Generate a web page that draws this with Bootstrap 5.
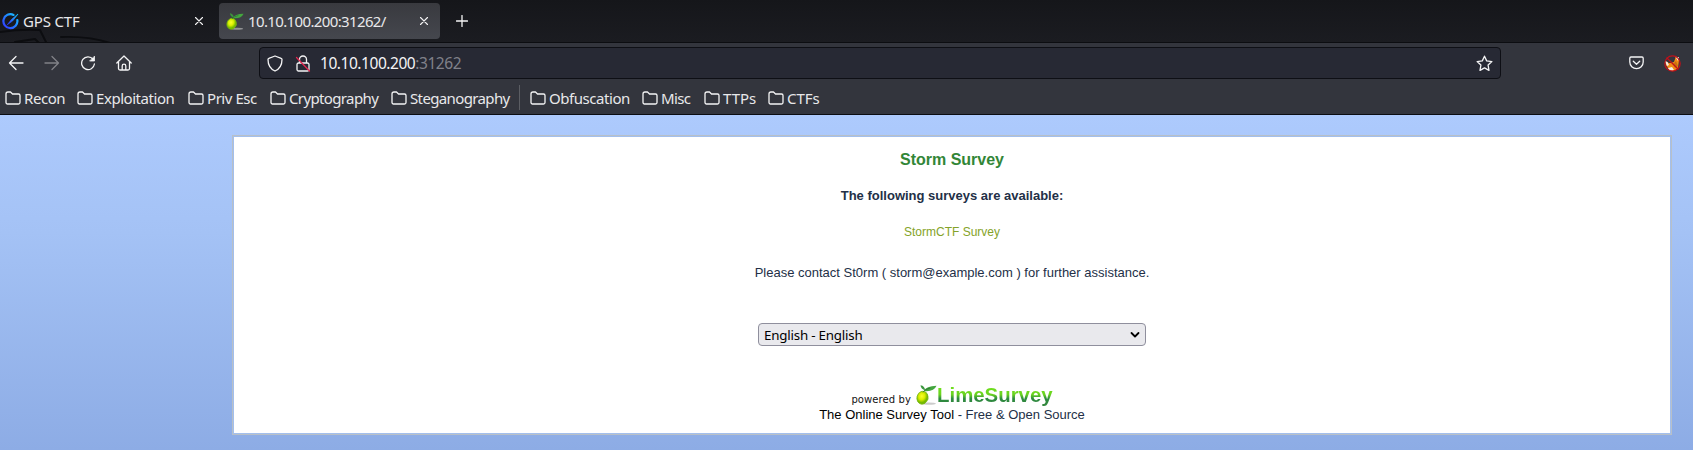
<!DOCTYPE html>
<html lang="en">
<head>
<meta charset="utf-8">
<title>Storm Survey</title>
<link href="https://cdn.jsdelivr.net/npm/bootstrap@5.3.0/dist/css/bootstrap.min.css" rel="stylesheet">
<style>
body{height:450px;overflow:hidden;background:#abc9fc;font-family:"Noto Sans",sans-serif;font-size:15px;line-height:20px}
svg{display:block;flex:none;fill:none;stroke:#f4f4f5;stroke-width:1.3;stroke-linecap:round;stroke-linejoin:round}
.tabstrip{height:43px;background:linear-gradient(#15161a,#1b1c21);border-bottom:1px solid #0c0d11;color:#e8e8ea;position:relative}
.dragon{position:absolute;left:0;top:26px}
.tab-one{width:219px;padding:0 15px 0 2px;position:relative}
.tab-two{width:221px;height:36px;padding:0 11px 0 7px;border-radius:4px;background:linear-gradient(#393a3f,#45474e)}
.toolbar{height:72px;background:#33353d;border-bottom:1px solid #0c0d12;color:#e8e8ea}
.navrow{height:40px;padding-top:4px}
.urlbar{width:1242px;height:32px;border:1px solid #0e0f15;border-radius:4px;background:#272934;font-size:15.5px;letter-spacing:-.45px;color:#f4f4f6}
.urlbar .port{color:#80818a}
.marks{height:29px;padding-left:5px}
.folder{gap:3px}
.tight{letter-spacing:-.45px}
.tighter{letter-spacing:-.63px}
.divider{width:1px;height:25px;background:#5b5d63}
.viewport{height:335px;padding:21px 22px 0 233px;background:linear-gradient(#adcafd,#a4c2f5 35%,#8dace5)}
.panel{height:298px;background:#fff;border:1px solid #a3bfed;outline:1px solid #b8c0c8;color:#233047;font:13px/16px "Liberation Sans",sans-serif;text-align:center}
.panel h1{font:bold 16px/20px "Liberation Sans",sans-serif;color:#328637;margin:13px 0 0}
.survey-link{font-size:12px;color:#85a329;text-decoration:none}
.lang{width:388px;height:23px;border:1px solid #8f8f9d;border-radius:4px;background:#e9e9ed;color:#000;font:13.33px/20px "Noto Sans",sans-serif;letter-spacing:-.2px;padding:0 5px 0 5px}
.powered{font:10px/12px "DejaVu Sans",sans-serif;letter-spacing:.1px;color:#111}
.wordmark{font:bold 20.4px/23px "Liberation Sans",sans-serif;background:linear-gradient(#6fe01c 10%,#6bd51f 45%,#2d8a40 64%,#35863c);-webkit-background-clip:text;background-clip:text;color:transparent}
</style>
</head>
<body>
<svg width="0" height="0" class="position-absolute"><defs>
<linearGradient id="blue" x1="0" y1="1" x2="1" y2="0"><stop stop-color="#3433ff"/><stop offset="1" stop-color="#13c9ff"/></linearGradient>
<radialGradient id="limefill" cx=".4" cy=".4"><stop stop-color="#faff2e"/><stop offset=".55" stop-color="#d9ee00"/><stop offset="1" stop-color="#75b900"/></radialGradient>
<symbol id="folder" viewBox="0 0 16 14"><path d="M1 3a2 2 0 0 1 2-2h2.500l2 2H13.500a1.500 1.500 0 0 1 1.500 1.500v7a1.500 1.500 0 0 1-1.500 1.500h-11A1.500 1.500 0 0 1 1 11.500z"/></symbol>
<symbol id="lime" viewBox="0 0 21 20"><g stroke="none"><ellipse cx="13" cy="18.6" rx="7" ry="1.2" fill="#b7b7b7" opacity=".7"/><ellipse cx="6.5" cy="12.7" rx="5.5" ry="6.5" transform="rotate(15 6.5 12.7)" fill="url(#limefill)" stroke="#78b812" stroke-width=".8"/><path d="M8 6Q10 1 20.500.8 18 7 8 6" fill="#44a63f"/><path d="M9 5.500Q5 4 4.500.3 9 1 9 5.500" fill="#3b963d"/><path d="M7 7Q9 4 14 3" fill="none" stroke="#24742f" stroke-width=".8"/></g></symbol>
</defs></svg>

<header>
<div class="tabstrip d-flex align-items-center">
  <svg class="dragon" width="130" height="17" viewBox="0 0 130 17" style="stroke:#0c0d10;stroke-width:2"><path d="M0 6Q20 3 40 4l7 14M15 16l20-3 4 4M61 11Q90 10 110 17"/></svg>
  <div class="tab-one d-flex align-items-center">
    <svg width="17" height="17" viewBox="0 0 17 17" style="stroke:url(#blue);stroke-width:2.2"><path d="M11.500 1.900A7 7 0 1 0 15.300 7"/><path d="M5.500 11.500l4-5L16 1l-5 6.500z" fill="url(#blue)" stroke-width=".7"/></svg>
    <span class="ms-1 me-auto" style="letter-spacing:-.15px">GPS CTF</span>
    <svg width="10" height="10" viewBox="0 0 10 10" style="stroke-width:1.1"><path d="M1.500 1.500l7 7m0-7l-7 7"/></svg>
  </div>
  <div class="tab-two d-flex align-items-center">
    <svg width="18" height="17"><use href="#lime" width="18" height="17"/></svg>
    <span class="tighter ms-1 me-auto">10.10.100.200:31262/</span>
    <svg width="10" height="10" viewBox="0 0 10 10" style="stroke-width:1.1"><path d="M1.500 1.500l7 7m0-7l-7 7"/></svg>
  </div>
  <svg class="ms-3" width="12" height="12" viewBox="0 0 12 12"><path d="M6 .5v11M.5 6h11"/></svg>
</div>

<div class="toolbar">
  <div class="navrow d-flex">
    <div class="d-flex align-items-center" style="width:259px;height:32px;padding-left:8px;gap:20px">
      <svg width="16" height="16" viewBox="0 0 16 16"><path d="M15 8H1.500M8 1.500L1.500 8 8 14.500"/></svg>
      <svg width="16" height="16" viewBox="0 0 16 16" opacity=".4"><path d="M1 8h13.500M8 1.500L14.500 8 8 14.500"/></svg>
      <svg width="16" height="16" viewBox="0 0 16 16"><path d="M13 4.200A6.400 6.400 0 1 0 14.400 9"/><path d="M14.500 1.500v4.500H10z" fill="#f4f4f5" stroke-width=".8"/></svg>
      <svg width="16" height="16" viewBox="0 0 16 16"><path d="M.8 8L8 1l7.200 7M2.500 7v6.500a1.500 1.500 0 0 0 1.500 1.500h8a1.500 1.500 0 0 0 1.500-1.500V7M6.200 15v-4a1.800 1.800 0 0 1 3.600 0v4"/></svg>
    </div>
    <div class="urlbar d-flex align-items-center">
      <svg style="margin-left:7px" width="16" height="17" viewBox="0 0 16 17"><path d="M8 1l6.200 2.300c.6.200.8.500.8 1.200C15 10 12.500 14 8 16 3.500 14 1 10 1 4.500c0-.7.2-1 .8-1.200z"/></svg>
      <svg style="margin-left:12px" width="16" height="17" viewBox="0 0 16 17"><path d="M2 9.500a1.500 1.500 0 0 1 1.500-1.500h9A1.500 1.500 0 0 1 14 9.500v5a1.500 1.500 0 0 1-1.500 1.500h-9A1.500 1.500 0 0 1 2 14.500zM4.500 8V4.500a3.500 3.500 0 0 1 7 0V8"/><path d="M1.500 2.500l13 13.500" stroke="#e22850"/></svg>
      <span class="me-auto" style="margin-left:9px">10.10.100.200<span class="port">:31262</span></span>
      <svg style="margin-right:7px" width="17" height="17" viewBox="0 0 17 17"><path d="M8.500 1.200l2.200 4.700 5.200.7-3.800 3.500.9 5.300-4.500-2.500L4 15.400l.9-5.300L1.100 6.600l5.200-.7z"/></svg>
    </div>
    <div class="d-flex align-items-center ms-auto" style="height:32px;padding-right:12px;gap:20px">
      <svg width="15" height="14" viewBox="0 0 15 14"><path d="M2 1h11a1.200 1.200 0 0 1 1.200 1.200V6A6.700 6.700 0 0 1 .8 6V2.200A1.200 1.200 0 0 1 2 1zM4.300 5.200l3.200 3 3.200-3"/></svg>
      <svg width="17" height="17" viewBox="0 0 17 17"><g stroke="none"><path d="M2 10l-1-4 4 2 5-1 2-6 3 4-1 8-4 3H6z" fill="#f28a14"/><path d="M4 3l4-2 3 2-2 4-4 1z" fill="#33353d"/><path d="M1 6l2.500 1L5 10l-2 1zM11.500 2L15 2l-1 4zM4 13l4-1 2 3-4 1z" fill="#f3eee7"/><path d="M9 9l3-3 2 5-3 2z" fill="#c9700f"/></g><circle cx="8.500" cy="8.500" r="7.700" style="stroke:#c1101a;stroke-width:1.2"/><path d="M3 3l11 11" style="stroke:#c1101a;stroke-width:1.2"/></svg>
    </div>
  </div>
  <nav class="marks d-flex align-items-center">
    <div class="folder tight d-flex align-items-center" style="width:72px"><svg width="16" height="14"><use href="#folder"/></svg>Recon</div>
    <div class="folder tight d-flex align-items-center" style="width:111px"><svg width="16" height="14"><use href="#folder"/></svg>Exploitation</div>
    <div class="folder tight d-flex align-items-center" style="width:82px"><svg width="16" height="14"><use href="#folder"/></svg>Priv Esc</div>
    <div class="folder tighter d-flex align-items-center" style="width:121px"><svg width="16" height="14"><use href="#folder"/></svg>Cryptography</div>
    <div class="folder tighter d-flex align-items-center" style="width:128px"><svg width="16" height="14"><use href="#folder"/></svg>Steganography</div>
    <div class="divider"></div>
    <div class="folder tight d-flex align-items-center" style="width:122px;padding-left:10px"><svg width="16" height="14"><use href="#folder"/></svg>Obfuscation</div>
    <div class="folder tighter d-flex align-items-center" style="width:62px"><svg width="16" height="14"><use href="#folder"/></svg>Misc</div>
    <div class="folder d-flex align-items-center" style="width:64px"><svg width="16" height="14"><use href="#folder"/></svg>TTPs</div>
    <div class="folder d-flex align-items-center"><svg width="16" height="14"><use href="#folder"/></svg>CTFs</div>
  </nav>
</div>
</header>

<main class="viewport">
  <section class="panel d-flex flex-column align-items-center">
    <h1>Storm Survey</h1>
    <strong style="margin-top:18px">The following surveys are available:</strong>
    <a class="survey-link" style="margin-top:20px">StormCTF Survey</a>
    <div style="margin-top:25px">Please contact St0rm ( storm@example.com ) for further assistance.</div>
    <div class="lang d-flex align-items-center justify-content-between" style="margin-top:42px"><span>English - English</span>
      <svg width="10" height="8" viewBox="0 0 10 8" style="stroke:#000;stroke-width:1.800"><path d="M1.500 2L5 5.500 8.500 2"/></svg></div>
    <div class="d-flex" style="margin-top:38px;height:23px">
      <span class="powered" style="padding-top:10px">powered by</span>
      <svg style="margin-left:5px;margin-top:1px" width="21" height="20"><use href="#lime" width="21" height="20"/></svg>
      <span class="wordmark">LimeSurvey</span>
    </div>
    <div style="line-height:15px"><span class="text-black">The Online Survey Tool</span> - Free &amp; Open Source</div>
  </section>
</main>
<script src="https://cdn.jsdelivr.net/npm/bootstrap@5.3.0/dist/js/bootstrap.bundle.min.js"></script>
</body>
</html>
